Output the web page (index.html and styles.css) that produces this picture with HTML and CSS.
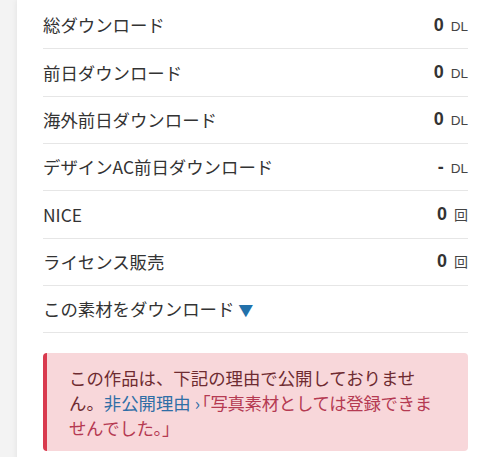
FILE: index.html
```html
<!DOCTYPE html>
<html lang="ja">
<head>
<meta charset="utf-8">
<link rel="stylesheet" href="styles.css">
</head>
<body>
<div class="card">
  <div class="row"><span class="label">総ダウンロード</span><span class="val"><b>0</b><small>DL</small></span></div>
  <div class="row"><span class="label">前日ダウンロード</span><span class="val"><b>0</b><small>DL</small></span></div>
  <div class="row"><span class="label">海外前日ダウンロード</span><span class="val"><b>0</b><small>DL</small></span></div>
  <div class="row"><span class="label">デザインAC前日ダウンロード</span><span class="val"><b>-</b><small>DL</small></span></div>
  <div class="row"><span class="label">NICE</span><span class="val"><b>0</b><small class="kai">回</small></span></div>
  <div class="row"><span class="label">ライセンス販売</span><span class="val"><b>0</b><small class="kai">回</small></span></div>
  <div class="row"><span class="label">この素材をダウンロード <span class="tri">▼</span></span></div>
  <div class="alert">この作品は、下記の理由で公開しておりません。<a class="link">非公開理由<span class="chev">›</span></a><span class="reason"><span class="halt">「</span>写真素材としては登録できませんでした。」</span></div>
</div>
</body>
</html>
```
FILE: styles.css
```css
html, body { margin: 0; padding: 0; }
body {
  background: #f3f3f3;
  font-family: "Noto Sans CJK JP", "Noto Sans", sans-serif;
  color: #333;
  height: 457px;
  overflow: hidden;
}
.card {
  margin-left: 17px;
  background: #fff;
  box-shadow: 0 0 6px rgba(0,0,0,0.08);
  padding: 2px 13px 20px 26px;
  min-height: 457px;
  box-sizing: border-box;
}
.row {
  display: flex;
  align-items: center;
  justify-content: space-between;
  height: 47.33px;
  box-sizing: border-box;
  border-bottom: 1px solid #e6e6e6;
  font-size: 17.4px;
}
.label { line-height: 1; }
.val { display: flex; align-items: baseline; gap: 7px; font-family: "Liberation Sans", Arial, sans-serif; }
.val b { font-size: 18px; font-weight: bold; color: #333; }
.val small { font-size: 13.5px; color: #444; }
.val small.kai { font-family: "Noto Sans CJK JP", sans-serif; font-size: 14px; }
.tri { color: #2371aa; font-size: 15px; }
.alert {
  margin-top: 20px;
  background: #f8d7da;
  border-left: 4px solid #d93a4e;
  border-radius: 4px;
  padding: 12px 36px 11px 22px;
  font-size: 17.4px;
  line-height: 25px;
  color: #6e2b31;
}
.link { color: #2f6ea6; }
.chev { margin: 0 2px 0 4px; }
.reason { color: #b53a52; letter-spacing: -0.3px; }
.halt { font-feature-settings: "halt"; }
```
